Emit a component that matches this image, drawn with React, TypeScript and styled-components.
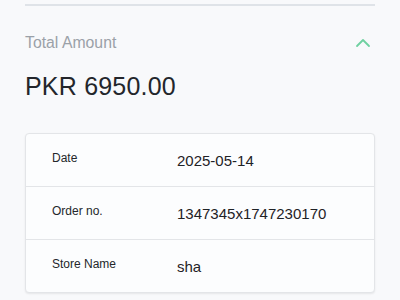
import React from 'react';
import styled, { createGlobalStyle } from 'styled-components';

const GlobalStyle = createGlobalStyle`
    html, body {
        margin: 0;
        padding: 0;
        background: #f8f9fb;
        font-family: 'Liberation Sans', Arial, sans-serif;
    }
`;

const Page = styled.div`
    width: 400px;
    height: 300px;
    overflow: hidden;
    padding: 4px 25px 0;
    box-sizing: border-box;
`;

const Divider = styled.div`
    height: 2px;
    background: #dfe3e8;
`;

const Header = styled.div`
    display: flex;
    align-items: center;
    justify-content: space-between;
    margin-top: 26px;
    height: 22px;
`;

const Label = styled.span`
    font-size: 15.8px;
    color: #9ba1a8;
`;

const Chevron = styled.svg`
    width: 16px;
    height: 10px;
    margin-right: 4px;
    margin-top: -1px;
`;

const Amount = styled.div`
    margin-top: 18px;
    font-size: 25px;
    color: #23262b;
    letter-spacing: 0.2px;
`;

const Card = styled.div`
    margin-top: 32px;
    background: #fcfdfe;
    border: 1px solid #e3e5e8;
    border-radius: 4px;
    box-shadow: 0 1px 2px rgba(0, 0, 0, 0.08);
`;

const Row = styled.div<{ $last?: boolean }>`
    display: grid;
    grid-template-columns: 125px 1fr;
    align-items: center;
    height: 52px;
    padding-left: 26px;
    border-bottom: ${({ $last }) => ($last ? 'none' : '1px solid #e3e5e8')};
`;

const Key = styled.span`
    font-size: 12px;
    color: #24272b;
    margin-top: -4px;
`;

const Value = styled.span`
    font-size: 15px;
    color: #1f2226;
`;

const details = [
    { key: 'Date', value: '2025-05-14' },
    { key: 'Order no.', value: '1347345x1747230170' },
    { key: 'Store Name', value: 'sha' },
];

export default function App() {
    return (
        <Page>
            <GlobalStyle />
            <Divider />
            <Header>
                <Label>Total Amount</Label>
                <Chevron viewBox='0 0 16 10'>
                    <path d='M2 8 L8 2 L14 8' fill='none' stroke='#6fd1a0' strokeWidth='1.8' strokeLinecap='round' strokeLinejoin='round' />
                </Chevron>
            </Header>
            <Amount>PKR 6950.00</Amount>
            <Card>
                {details.map((d, i) => (
                    <Row key={d.key} $last={i === details.length - 1}>
                        <Key>{d.key}</Key>
                        <Value>{d.value}</Value>
                    </Row>
                ))}
            </Card>
        </Page>
    );
}
